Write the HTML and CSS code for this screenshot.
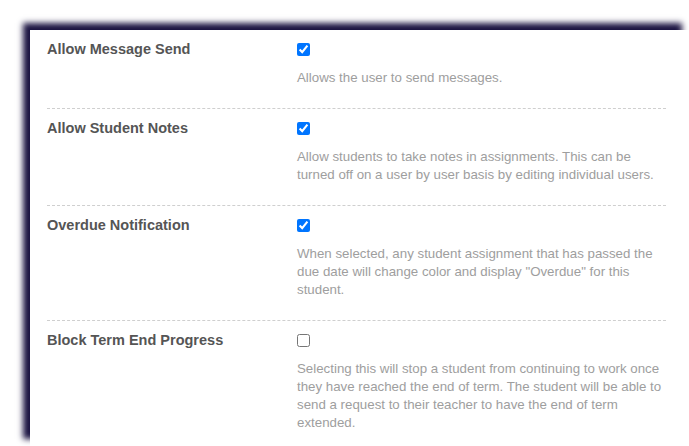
FILE: index.html
```html
<!DOCTYPE html>
<html>
<head>
<meta charset="utf-8">
<link rel="stylesheet" href="styles.css">
</head>
<body>
<div class="panel">
  <div class="setting">
    <div class="label">Allow Message Send</div>
    <div class="control"><input type="checkbox" checked></div>
    <div class="desc">Allows the user to send messages.</div>
  </div>
  <div class="setting">
    <div class="label">Allow Student Notes</div>
    <div class="control"><input type="checkbox" checked></div>
    <div class="desc">Allow students to take notes in assignments. This can be turned off on a user by user basis by editing individual users.</div>
  </div>
  <div class="setting">
    <div class="label">Overdue Notification</div>
    <div class="control"><input type="checkbox" checked></div>
    <div class="desc">When selected, any student assignment that has passed the due date will change color and display "Overdue" for this student.</div>
  </div>
  <div class="setting last">
    <div class="label">Block Term End Progress</div>
    <div class="control"><input type="checkbox"></div>
    <div class="desc">Selecting this will stop a student from continuing to work once they have reached the end of term. The student will be able to send a request to their teacher to have the end of term extended.</div>
  </div>
</div>
</body>
</html>
```

FILE: styles.css
```css
html, body {
  margin: 0;
  padding: 0;
  background: #ffffff;
  overflow: hidden;
}
body {
  padding: 30px 0 0 30px;
  font-family: "Liberation Sans", Arial, sans-serif;
}
.panel {
  width: 659px;
  height: 416px;
  background: #ffffff;
  box-shadow: -7px -7px 6px #1b1442;
  box-sizing: border-box;
  padding: 0 23px 0 17px;
}
.setting {
  display: grid;
  grid-template-columns: 250px 1fr;
  grid-template-rows: 18px auto;
  row-gap: 11px;
  padding: 10px 0 21px 0;
  border-bottom: 1px dashed #cfcfcf;
}
.setting.last {
  border-bottom: none;
}
.label {
  grid-column: 1;
  grid-row: 1;
  font-size: 14.5px;
  font-weight: bold;
  color: #555555;
  line-height: 18px;
}
.control {
  grid-column: 2;
  grid-row: 1;
  display: flex;
  align-items: center;
  height: 18px;
}
.control input {
  margin: 0;
  width: 13px;
  height: 13px;
}
.desc {
  grid-column: 2;
  grid-row: 2;
  font-size: 13.3px;
  line-height: 18px;
  color: #9e9e9e;
}
```
